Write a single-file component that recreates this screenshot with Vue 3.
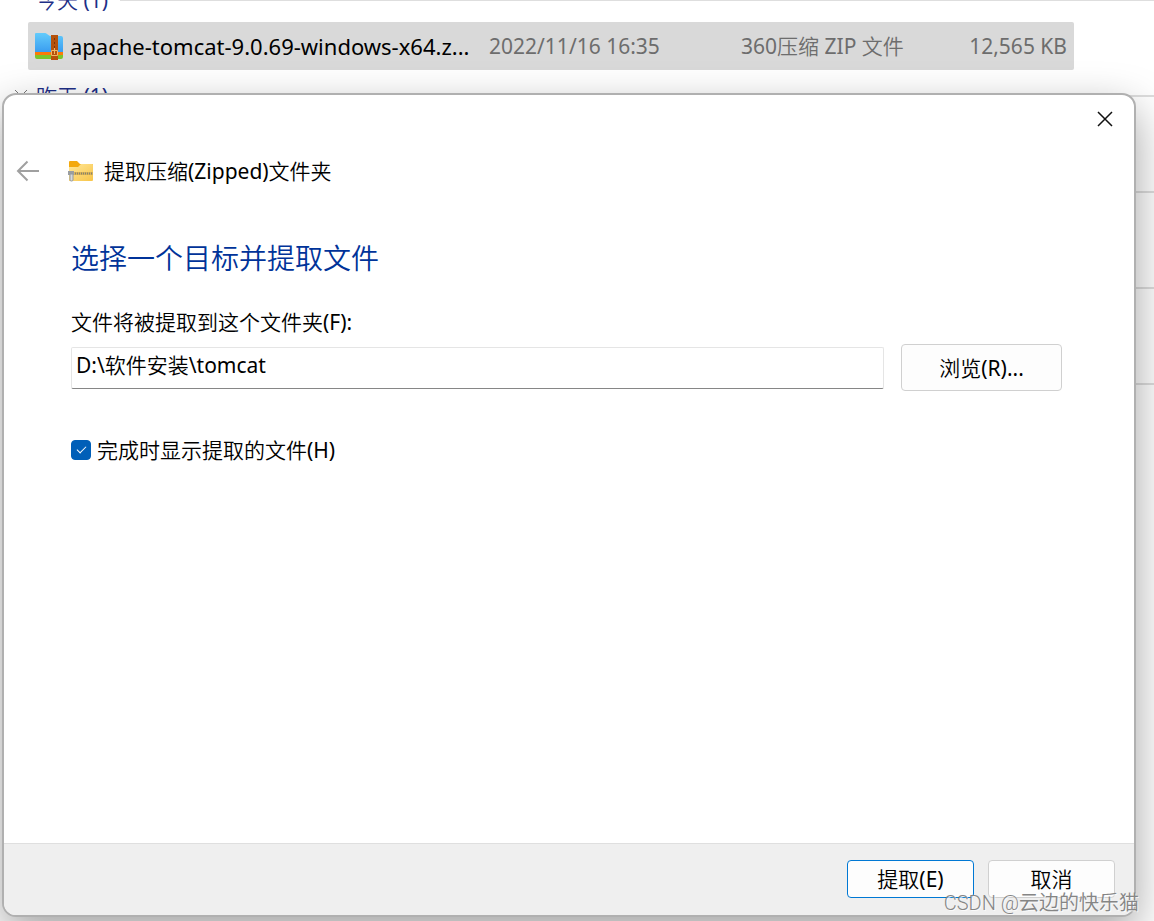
<template>
  <div class="desktop">
    <!-- Explorer file list -->
    <main class="explorer">
      <section v-for="group in groups" :key="group.id" class="group">
        <h2 class="group-header">
          <svg class="chevron" viewBox="0 0 14 8" aria-hidden="true">
            <path d="M1 1l6 6 6-6" />
          </svg>
          <span v-if="group.title" class="group-title">{{ group.title }}</span>
          <span class="group-line"></span>
        </h2>
        <table v-if="group.files.length" class="files">
          <colgroup>
            <col />
            <col class="col-date" />
            <col class="col-type" />
            <col class="col-size" />
          </colgroup>
          <tbody>
            <tr v-for="file in group.files" :key="file.name">
              <td class="name">
                <div class="name-inner">
                  <svg class="zip-icon" viewBox="0 0 28 28" aria-hidden="true">
                    <defs>
                      <linearGradient id="blue" x1="0" y1="0" x2="0" y2="1">
                        <stop offset="0" stop-color="#63cbfb" />
                        <stop offset="1" stop-color="#3a9df0" />
                      </linearGradient>
                    </defs>
                    <path d="M0 16h28v9a2 2 0 0 1-2 2H2a2 2 0 0 1-2-2z" fill="#7cc52a" />
                    <path d="M0 16h28v7H0z" fill="#fb7a08" />
                    <path d="M0 2a1 1 0 0 1 1-1h9q1 0 2 1l3 2h11a2 2 0 0 1 2 2v14H0z" fill="url(#blue)" />
                    <path d="M16 3h7v25h-7z" fill="#b5520c" />
                    <path d="M19.500 6v11" stroke="#7d3408" stroke-width="1" stroke-dasharray="2 2" />
                    <path d="M16.500 18.500h6v5h-6zM19.500 16v6" fill="none" stroke="#f0b765" />
                  </svg>
                  <span>{{ file.name }}</span>
                </div>
              </td>
              <td>{{ file.date }}</td>
              <td>{{ file.type }}</td>
              <td class="size">{{ file.size }}</td>
            </tr>
          </tbody>
        </table>
        <div v-else class="files-blank"></div>
      </section>
    </main>

    <!-- Extract wizard -->
    <form class="dialog" role="dialog" aria-labelledby="dialog-title" @submit.prevent>
      <div class="titlebar">
        <button type="button" class="btn-close" aria-label="关闭">
          <svg viewBox="0 0 16 16"><path d="M1 1l14 14M15 1L1 15" /></svg>
        </button>
      </div>

      <header class="wizard-header">
        <button type="button" class="btn-back" aria-label="返回">
          <svg viewBox="0 0 24 24"><path d="M23 12H2M11.500 2.500L2 12l9.500 9.500" /></svg>
        </button>
        <svg class="folder-icon" viewBox="0 0 26 24" aria-hidden="true">
          <defs>
            <linearGradient id="yellow" x1="0" y1="0" x2="1" y2="1">
              <stop offset="0" stop-color="#ffe79a" />
              <stop offset="1" stop-color="#f8c549" />
            </linearGradient>
          </defs>
          <path d="M1 3q0-1 1-1h7l3 3h12q1 0 1 1v5H1z" fill="#f3a90f" />
          <path d="M1 8h9l3-3h11q1 0 1 1v15q0 1-1 1H1z" fill="url(#yellow)" />
          <path d="M5 14.500h20" stroke="#dcb455" stroke-width="3" />
          <path d="M5 14.500h20" stroke="#85826f" stroke-width="2" stroke-dasharray="1 1" />
          <path d="M0 12h6v4H0z" fill="#9a9ea2" />
          <path d="M2 15h3v6q0 1-1.500 1T2 21z" fill="#d5d9dc" stroke="#959a9e" />
        </svg>
        <span id="dialog-title">提取压缩(Zipped)文件夹</span>
      </header>

      <div class="content">
        <h1>选择一个目标并提取文件</h1>
        <label for="target" class="target-label">文件将被提取到这个文件夹(F):</label>
        <div class="target-row">
          <input id="target" v-model="target" type="text" spellcheck="false" />
          <button type="button" class="btn btn-browse">浏览(R)...</button>
        </div>
        <div class="check-row">
          <input id="show" v-model="showFiles" type="checkbox" />
          <label for="show">完成时显示提取的文件(H)</label>
        </div>
      </div>

      <footer class="actions">
        <button type="submit" class="btn btn-primary">提取(E)</button>
        <button type="button" class="btn">取消</button>
      </footer>
    </form>

    <div class="watermark">CSDN @云边的快乐猫</div>
  </div>
</template>

<script setup>
import { ref } from 'vue'

const target = ref('D:\\软件安装\\tomcat')
const showFiles = ref(true)

const groups = [
  {
    id: 'today',
    title: '今天 (1)',
    files: [
      {
        name: 'apache-tomcat-9.0.69-windows-x64.z...',
        date: '2022/11/16 16:35',
        type: '360压缩 ZIP 文件',
        size: '12,565 KB'
      }
    ]
  },
  { id: 'yesterday', title: '昨天 (1)', files: [] },
  { id: 'week', title: '', files: [] },
  { id: 'month', title: '', files: [] },
  { id: 'older', title: '', files: [] }
]
</script>

<style>
body {
  margin: 0;
}
</style>

<style scoped>
.desktop {
  position: relative;
  height: 100vh;
  min-height: 600px;
  overflow: hidden;
  box-sizing: border-box;
  background: #fff;
  color: #000;
  font-family: "Noto Sans", "Noto Sans CJK SC DemiLight", "Noto Sans CJK SC", sans-serif;
  font-size: 21px;
  line-height: 28px;
}

.desktop *,
.desktop *::before {
  box-sizing: border-box;
}

button,
input {
  font: inherit;
  color: inherit;
}

svg {
  display: block;
  flex: none;
}

/* Explorer */
.explorer {
  margin-top: -26px;
}

.group-header {
  display: flex;
  align-items: center;
  height: 48px;
  margin: 0;
  padding: 4px 0 0 14px;
  font-size: 21px;
  font-weight: 400;
  color: #1e2f87;
}

.chevron {
  width: 14px;
  height: 8px;
  margin: 0 8px 6px 0;
  fill: none;
  stroke: #777;
}

.group-line {
  flex: 1;
  height: 2px;
  margin-left: 12px;
  background: #dedede;
}

.files {
  width: calc(100% - 108px);
  height: 48px;
  margin-left: 28px;
  border-spacing: 0;
  table-layout: fixed;
  background: #d9d9d9;
  border-radius: 2px;
  color: #6d6d6d;
}

.files-blank {
  height: 48px;
}

.col-date {
  width: 252px;
}

.col-type {
  width: 200px;
}

.col-size {
  width: 133px;
}

td {
  padding: 0;
  white-space: nowrap;
}

.name {
  color: #000;
  font-size: 22px;
}

.name-inner {
  display: flex;
  align-items: center;
  gap: 7px;
  padding-left: 7px;
}

.zip-icon {
  width: 28px;
  height: 28px;
}

.size {
  padding-right: 7px;
  text-align: right;
}

/* Wizard window */
.dialog {
  position: absolute;
  inset: 93px 18px 4px 2px;
  display: flex;
  flex-direction: column;
  overflow: hidden;
  background: #fff;
  border: 2px solid #b0b0b0;
  border-radius: 14px;
  box-shadow: 0 16px 44px rgba(0, 0, 0, 0.36);
}

.titlebar {
  display: flex;
  justify-content: flex-end;
}

.btn-close,
.btn-back {
  display: flex;
  align-items: center;
  justify-content: center;
  padding: 0;
  border: none;
  background: none;
}

.btn-close {
  width: 58px;
  height: 48px;
}

.btn-close svg {
  width: 16px;
  height: 16px;
  fill: none;
  stroke: #111;
  stroke-width: 1.5;
}

.btn-back svg {
  width: 24px;
  height: 24px;
  fill: none;
  stroke: #a0a0a0;
  stroke-width: 2;
}

.wizard-header {
  display: flex;
  align-items: center;
  height: 56px;
  padding-left: 12px;
}

.folder-icon {
  width: 26px;
  height: 24px;
  margin: 0 10px 0 28px;
}

.content {
  flex: 1;
  padding: 39px 72px 0 67px;
}

h1 {
  margin: 0 0 30px;
  font-size: 28px;
  font-weight: 400;
  line-height: 40px;
  color: #003399;
}

.target-label {
  display: block;
}

.target-row {
  display: flex;
  align-items: center;
  gap: 17px;
  margin-top: 8px;
}

.target-row input {
  flex: 1;
  min-width: 0;
  height: 42px;
  padding: 0 4px 8px;
  border: 1px solid #e5e5e5;
  border-bottom-color: #868686;
  border-radius: 2px;
  background: #fff;
  outline: none;
}

.btn {
  width: 127px;
  height: 38px;
  padding: 0;
  border: 1px solid #d0d0d0;
  border-radius: 4px;
  background: #fdfdfd;
}

.btn-browse {
  width: 161px;
  height: 47px;
}

.btn-primary {
  border-color: #0078d4;
}

.check-row {
  display: flex;
  align-items: center;
  gap: 6px;
  margin-top: 45px;
}

.check-row input {
  appearance: none;
  display: flex;
  align-items: center;
  justify-content: center;
  width: 20px;
  height: 20px;
  margin: 0;
  border: 1px solid #868686;
  border-radius: 4px;
}

.check-row input:checked {
  border-color: #005fb8;
  background: #005fb8;
}

.check-row input:checked::before {
  content: "";
  width: 9px;
  height: 5px;
  margin-bottom: 3px;
  border: solid #fff;
  border-width: 0 0 1px 1px;
  transform: rotate(-45deg);
}

.actions {
  display: flex;
  justify-content: flex-end;
  gap: 14px;
  height: 72px;
  padding: 16px 19px 0;
  border-top: 1px solid #dfdfdf;
  background: #efefef;
}

.watermark {
  position: absolute;
  right: 15px;
  bottom: 6px;
  font-family: Roboto, "Noto Sans CJK SC DemiLight", "Noto Sans CJK SC", sans-serif;
  font-size: 20px;
  font-weight: 300;
  line-height: 24px;
  color: #858585;
  text-shadow: 1px 1px 0 rgba(255, 255, 255, 0.7);
}
</style>
